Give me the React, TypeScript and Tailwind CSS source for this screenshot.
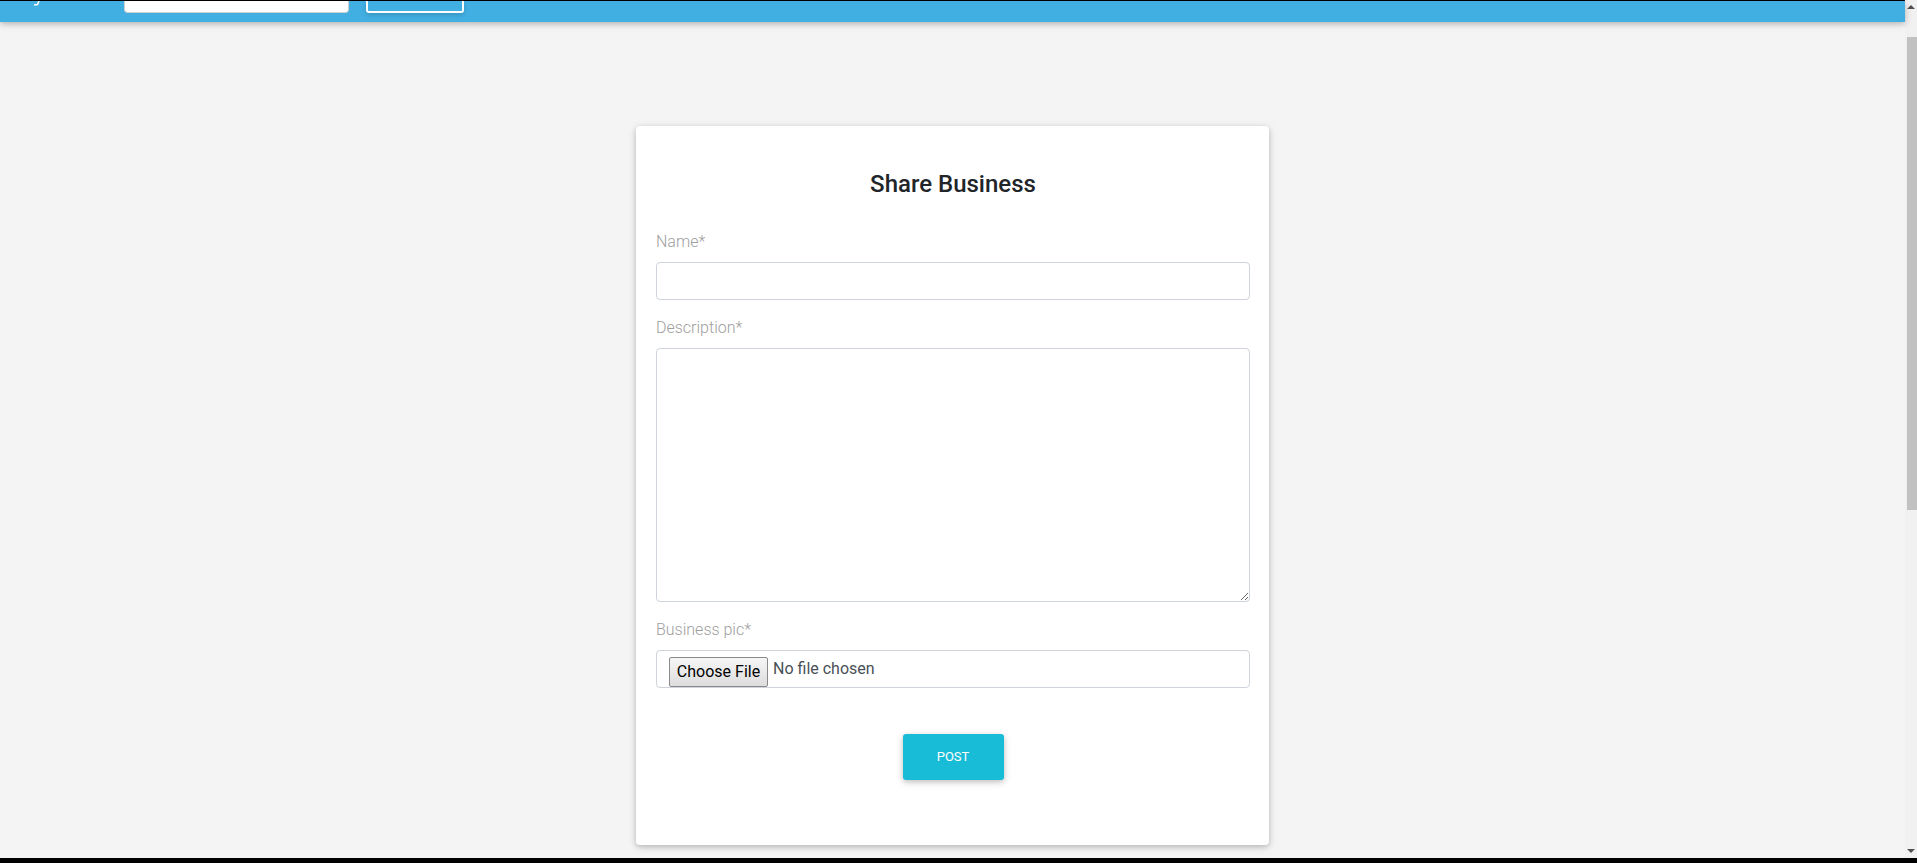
import { useState } from 'react';

export default function App() {
  const [name, setName] = useState('');
  const [description, setDescription] = useState('');
  const [fileName, setFileName] = useState<string | null>(null);

  return (
    <div className="h-[863px] w-full flex flex-col overflow-hidden font-['Roboto',sans-serif]">
      <div className="flex flex-1 min-h-0">
        {/* page */}
        <div className="flex-1 flex flex-col bg-[#f4f4f4]">
          <div className="h-[1px] bg-black" />
          <header className="relative z-10 h-[21px] bg-[#42afe3] flex items-start pl-[33px] shadow-[0_2px_5px_0_rgba(0,0,0,0.16),0_2px_10px_0_rgba(0,0,0,0.12)]">
            <svg width="7" height="5" viewBox="0 0 7 5" className="mt-0">
              <path d="M6 0 L4.5 3.5 L1 4" stroke="#fff" strokeWidth="1.6" fill="none" />
            </svg>
            <div className="ml-[84px] w-[225px] h-[12px] bg-white rounded-b-[4px] border border-t-0 border-[#d0d0d0]" />
            <div className="ml-[17px] w-[98px] h-[12px] border-2 border-t-0 border-white rounded-b-[3px] shadow-[0_2px_5px_0_rgba(0,0,0,0.16)]" />
          </header>

          <main className="flex-1 flex justify-center items-start">
            <div className="mt-[104px] w-[633px] bg-white rounded-[4px] pt-[44px] pb-[65px] pl-[20px] pr-[19px] shadow-[0_2px_5px_0_rgba(0,0,0,0.16),0_2px_10px_0_rgba(0,0,0,0.12)]">
              <h4 className="text-center text-[24px] leading-[29px] font-medium text-[#212529] mb-[31px]">
                Share Business
              </h4>

              <div className="mb-4">
                <label className="block text-base leading-6 font-light text-[#9e9e9e] mb-2">Name*</label>
                <input
                  value={name}
                  onChange={(e) => setName(e.target.value)}
                  className="block w-full h-[38px] px-3 text-base text-[#495057] bg-white border border-[#ced4da] rounded-[4px] outline-none"
                />
              </div>

              <div className="mb-4">
                <label className="block text-base leading-6 font-light text-[#9e9e9e] mb-2">Description*</label>
                <textarea
                  value={description}
                  onChange={(e) => setDescription(e.target.value)}
                  className="block w-full h-[254px] px-3 py-1.5 text-base text-[#495057] bg-white border border-[#ced4da] rounded-[4px] outline-none"
                />
              </div>

              <div>
                <label className="block text-base leading-6 font-light text-[#9e9e9e] mb-2">Business pic*</label>
                <label className="flex items-center w-full h-[38px] pl-3 pt-[6px] bg-white border border-[#ced4da] rounded-[4px] cursor-pointer">
                  <span className="flex items-center justify-center w-[99px] h-[30px] self-start text-base text-black bg-linear-to-b from-[#f6f6f6] to-[#dddddd] border border-[#8a8a8a] rounded-[2px]">
                    Choose File
                  </span>
                  <span className="ml-[5px] -mt-[6px] text-base text-[#495057]">{fileName ?? 'No file chosen'}</span>
                  <input
                    type="file"
                    className="sr-only"
                    onChange={(e) => setFileName(e.target.files?.[0]?.name ?? null)}
                  />
                </label>
              </div>

              <button className="block mx-auto mt-[46px] w-[101px] h-[46px] rounded-[3px] bg-[#18bcd6] text-white text-[13px] uppercase shadow-[0_2px_5px_0_rgba(0,0,0,0.16),0_2px_10px_0_rgba(0,0,0,0.12)]">
                Post
              </button>
            </div>
          </main>
        </div>

        {/* scrollbar */}
        <div className="w-[12px] bg-[#f1f1f1] flex flex-col items-center">
          <svg width="8" height="5" viewBox="0 0 8 5" className="mt-[4px]">
            <path d="M0 5 L4 1 L8 5 Z" fill="#505050" />
          </svg>
          <div className="mt-[28px] self-end w-[10px] h-[473px] bg-[#c1c1c1]" />
          <div className="flex-1" />
          <svg width="8" height="5" viewBox="0 0 8 5" className="mb-[4px]">
            <path d="M0 0 L4 4 L8 0 Z" fill="#505050" />
          </svg>
        </div>
      </div>
      <div className="h-[5px] bg-black" />
    </div>
  );
}
